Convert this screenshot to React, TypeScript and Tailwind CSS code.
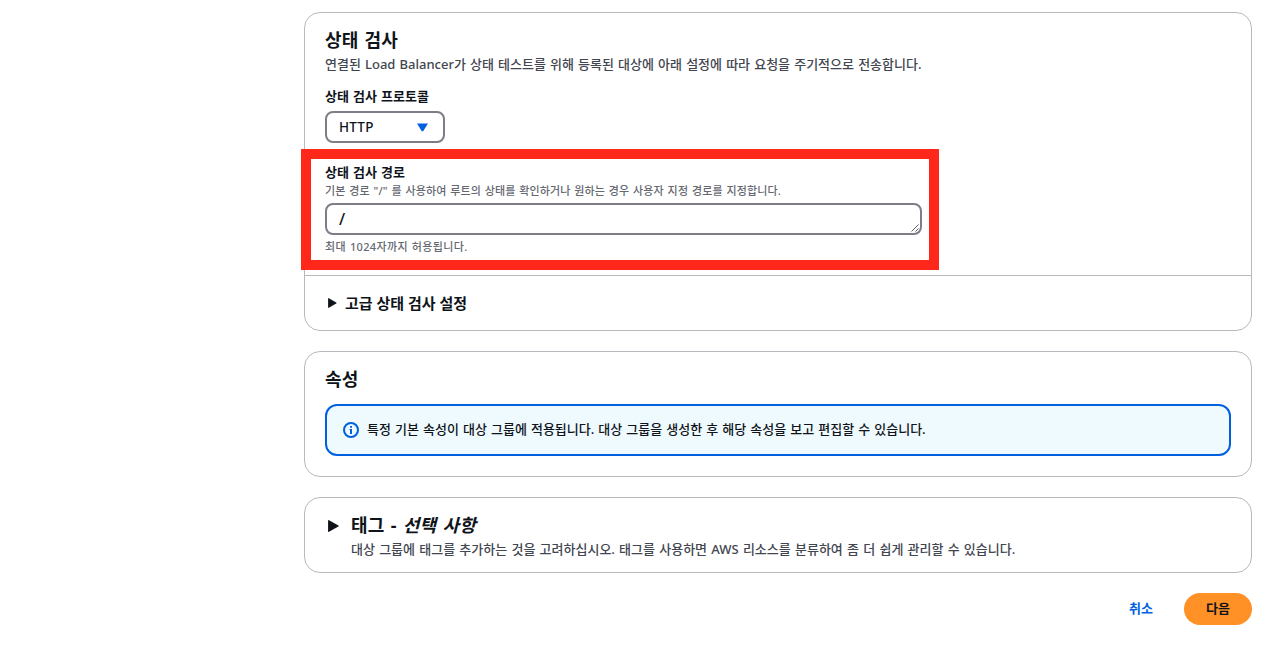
import React from "react";

interface CardProps {
  className?: string;
  children: React.ReactNode;
}

const Card: React.FC<CardProps> = ({ className = "", children }) => (
  <section className={`rounded-[16px] border border-[#b8b9bf] bg-white ${className}`}>
    {children}
  </section>
);

// Right-pointing caret for collapsed sections
const Caret: React.FC<{ className: string }> = ({ className }) => (
  <svg className={className} viewBox="0 0 10 12" preserveAspectRatio="none" fill="#0f141a" stroke="#0f141a" strokeLinejoin="round">
    <path d="M0.6 0.6 9.2 6 0.6 11.4Z" />
  </svg>
);

const HealthCheck: React.FC = () => (
  <Card className="relative h-[319px]">
    <div className="flex h-[263px] flex-col items-start border-b border-[#b8b9bf] px-5 pt-[15px]">
      <h2 className="h-6 text-[18px] leading-6 font-bold tracking-[0.3px]">상태 검사</h2>
      <p className="mt-[2px] h-5 text-[13px] leading-5 font-medium text-[#424650]">
        연결된 Load Balancer가 상태 테스트를 위해 등록된 대상에 아래 설정에 따라 요청을 주기적으로 전송합니다.
      </p>

      <label className="mt-3 h-5 text-[13px] leading-5 font-bold">상태 검사 프로토콜</label>
      <button className="mt-[5px] flex h-8 w-[120px] items-center justify-between rounded-lg border-2 border-[#7d7d87] pr-[15px] pl-3 text-[13.5px] font-medium tracking-[0.2px]">
        HTTP
        <svg className="h-[9px] w-[11px]" viewBox="0 0 11 9" fill="#0061e0">
          <path d="M0 0.5H11L6.2 8.2H4.8Z" />
        </svg>
      </button>

      <label className="mt-[19px] h-5 text-[13px] leading-5 font-bold">상태 검사 경로</label>
      <span className="mt-px h-4 text-[11px] leading-4 font-medium tracking-[0.14px] text-[#656871]">
        기본 경로 "/" 를 사용하여 루트의 상태를 확인하거나 원하는 경우 사용자 지정 경로를 지정합니다.
      </span>
      <div className="mt-[4px] flex h-8 w-[597px] items-center justify-between rounded-lg border-2 border-[#7d7d87] pl-3 text-[16px] font-medium">
        /
        <svg className="h-[9px] w-[9px] self-end" viewBox="0 0 9 9" stroke="#4a4a50" strokeWidth="0.9">
          <path d="M0.5 7.5 7.5 0.5M4.5 7.5 7.5 4.5" />
        </svg>
      </div>
      <span className="mt-[4px] h-4 text-[11px] leading-4 font-medium tracking-[0.35px] text-[#656871]">최대 1024자까지 허용됩니다.</span>
    </div>

    <div className="flex h-[54px] items-center gap-2 pl-[23px]">
      <Caret className="h-[10px] w-[9px]" />
      <h3 className="text-[15px] font-bold [word-spacing:0]">고급 상태 검사 설정</h3>
    </div>

    {/* highlight around the path field */}
    <div className="absolute top-[136px] -left-1 h-[121px] w-[638px] border-[10px] border-[#ff261a]" />
  </Card>
);

const Attributes: React.FC = () => (
  <Card className="h-[126px] px-5 pt-[15px]">
    <h2 className="h-6 text-[18px] leading-6 font-bold tracking-[0.3px]">속성</h2>
    <div className="mt-[13px] flex h-[52px] items-center gap-2 rounded-xl border-2 border-[#0061e0] bg-[#effaff] px-4">
      <svg className="h-4 w-4" viewBox="0 0 16 16" fill="none" stroke="#0061e0" strokeWidth="2">
        <circle cx="8" cy="8" r="7" />
        <path d="M8 4V5.8M8 7V12" />
        <path d="M6.6 7.5H8" strokeWidth="1" />
      </svg>
      <p className="-mt-[2px] text-[13px] leading-5 font-medium [word-spacing:0.7px]">
        특정 기본 속성이 대상 그룹에 적용됩니다. 대상 그룹을 생성한 후 해당 속성을 보고 편집할 수 있습니다.
      </p>
    </div>
  </Card>
);

const Tags: React.FC = () => (
  <Card className="flex h-[76px] gap-3 pt-[15px] pl-[23px]">
    <Caret className="mt-[7px] h-3 w-[11px]" />
    <div>
      <h2 className="h-6 text-[18px] leading-6 font-bold tracking-[0.3px] [word-spacing:1px]">
        태그 - <em>선택 사항</em>
      </h2>
      <p className="mt-[2px] text-[13px] leading-5 font-medium text-[#424650] [word-spacing:0.85px]">
        대상 그룹에 태그를 추가하는 것을 고려하십시오. 태그를 사용하면 AWS 리소스를 분류하여 좀 더 쉽게 관리할 수 있습니다.
      </p>
    </div>
  </Card>
);

const App: React.FC = () => {
  return (
    <div className="h-[656px] w-[1272px] overflow-hidden bg-white pt-3 pr-5 pl-[304px] font-['Noto_Sans','Noto_Sans_CJK_KR',sans-serif] text-[#0f141a] [word-spacing:0.75px]">
      <main className="flex flex-col gap-5">
        <HealthCheck />
        <Attributes />
        <Tags />
        <div className="flex items-center justify-end gap-[31px] text-[13px] font-bold">
          <button className="text-[#0061e0]">취소</button>
          <button className="h-8 w-[68px] rounded-full bg-[#ff9126]">다음</button>
        </div>
      </main>
    </div>
  );
};

export default App;
